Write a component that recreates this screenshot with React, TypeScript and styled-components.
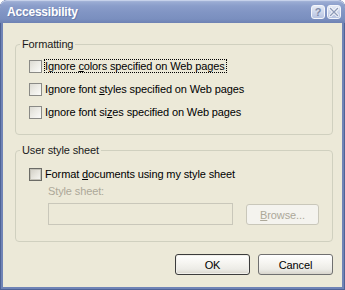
import React from "react";
import styled, { createGlobalStyle } from "styled-components";

const Global = createGlobalStyle`
  html, body { margin: 0; padding: 0; background: #ffffff; }
  body { font-family: "Liberation Sans", Arial, sans-serif; font-size: 11px; color: #000; letter-spacing: -0.12px; }
  #root { width: 345px; height: 290px; }
`;

const Window = styled.div`
  width: 345px;
  height: 290px;
  box-sizing: border-box;
  display: flex;
  flex-direction: column;
  background: #7084b6;
  border-radius: 7px 7px 0 0;
  padding: 0 3px 3px 3px;
  box-shadow: inset 1px 0 0 #4f6396, inset -1px 0 0 #4f6396, inset 0 -1px 0 #4f6396;
  overflow: hidden;
`;

const TitleBar = styled.div`
  height: 23px;
  margin: 0 -3px;
  padding: 0 4px 0 7px;
  box-sizing: border-box;
  display: flex;
  align-items: center;
  background: linear-gradient(
    180deg,
    #b4c2e0 0px,
    #9aabd3 2px,
    #8a9dca 6px,
    #8195c4 12px,
    #7a8fbf 19px,
    #6e82b3 23px
  );
  border-radius: 7px 7px 0 0;
  box-shadow: inset 0 1px 0 #c6d1ea;
`;

const Title = styled.span`
  flex: 1;
  font-family: "Liberation Sans", Arial, sans-serif;
  font-weight: bold;
  font-size: 12px;
  letter-spacing: -0.2px;
  color: #ffffff;
  text-shadow: 1px 1px 0 #6a7cab;
  padding-top: 1px;
`;

const CaptionButtons = styled.div`
  display: flex;
  gap: 2px;
  margin-top: 1px;
`;

const CaptionButton = styled.div`
  width: 14px;
  height: 14px;
  box-sizing: border-box;
  border: 1px solid #f4f6fb;
  border-radius: 3px;
  background: linear-gradient(180deg, #e6ebf6 0%, #c9d3ea 60%, #b6c3e1 100%);
  display: flex;
  align-items: center;
  justify-content: center;
  color: #7d8aa8;
  font-family: "Liberation Sans", Arial, sans-serif;
  font-weight: bold;
  font-size: 11px;
  line-height: 1;
`;

const Body = styled.div`
  flex: 1;
  background: #ece9d8;
  padding: 15px 9px 0 12px;
  display: flex;
  flex-direction: column;
`;

const Group = styled.fieldset`
  margin: 0;
  padding: 0;
  border: 1px solid #d0d0bf;
  border-radius: 4px;
  min-width: 0;
  & + & {
    margin-top: 9px;
  }
`;

const Legend = styled.legend`
  margin-left: 4px;
  padding: 0 2px;
  line-height: 13px;
  color: #1a1a1a;
`;

const GroupContent = styled.div<{ $top: number; $bottom: number }>`
  padding: ${(p) => p.$top}px 0 ${(p) => p.$bottom}px 13px;
  display: flex;
  flex-direction: column;
  gap: 9px;
`;

const Row = styled.div`
  display: flex;
  align-items: center;
  height: 14px;
  gap: 2px;
`;

const Check = styled.span<{ $hot?: boolean }>`
  width: 13px;
  height: 13px;
  box-sizing: border-box;
  flex: none;
  border: 1px solid ${(p) => (p.$hot ? "#6b6b66" : "#8a8a86")};
  background: ${(p) =>
    p.$hot
      ? "linear-gradient(135deg, #cfcdc4 0%, #e6e4dc 50%, #f8f8f4 100%)"
      : "linear-gradient(135deg, #dcdbd3 0%, #ecebe5 45%, #fbfbf9 100%)"};
  box-shadow: ${(p) => (p.$hot ? "inset 0 0 0 1px #c4c2b8" : "none")};
`;

const Label = styled.span<{ $focus?: boolean }>`
  border: 1px dotted ${(p) => (p.$focus ? "#000" : "transparent")};
  line-height: 12px;
  padding-right: 1px;
  white-space: nowrap;
`;

const Key = styled.span`
  text-decoration: underline;
`;

const SubLabel = styled.div`
  color: #aca899;
  margin: -5px 0 0 19px;
  line-height: 13px;
`;

const FileRow = styled.div`
  display: flex;
  align-items: flex-end;
  gap: 13px;
  margin: -4px 0 0 19px;
`;

const TextField = styled.div`
  width: 185px;
  height: 22px;
  box-sizing: border-box;
  border: 1px solid #c9c7ba;
  background: #ece9d8;
`;

const PushButton = styled.button<{ $disabled?: boolean; $default?: boolean }>`
  width: ${(p) => (p.$disabled ? 73 : 75)}px;
  height: 21px;
  box-sizing: border-box;
  padding: 0;
  font-family: "Liberation Sans", Arial, sans-serif;
  font-size: 11px;
  letter-spacing: -0.12px;
  border-radius: 3px;
  border: 1px solid
    ${(p) => (p.$disabled ? "#c9c7ba" : p.$default ? "#3c3c3c" : "#707070")};
  color: ${(p) => (p.$disabled ? "#aca899" : "#000")};
  background: ${(p) =>
    p.$disabled
      ? "#f4f3ee"
      : "linear-gradient(180deg, #ffffff 0%, #f6f5f1 40%, #ecebe6 75%, #d8d5cc 100%)"};
  box-shadow: ${(p) =>
    p.$default ? "inset 0 0 0 1px #f0efea" : "none"};
`;

const Footer = styled.div`
  display: flex;
  justify-content: flex-end;
  gap: 8px;
  margin-top: 12px;
`;

const CloseGlyph = () => (
  <svg width="10" height="10" viewBox="0 0 10 10">
    <path d="M1.5 1.5 L8.5 8.5 M8.5 1.5 L1.5 8.5" stroke="#ffffff" strokeWidth="3" strokeLinecap="square" />
    <path d="M1.5 1.5 L8.5 8.5 M8.5 1.5 L1.5 8.5" stroke="#8d9ab8" strokeWidth="1.4" strokeLinecap="square" />
  </svg>
);

export default function App() {
  return (
    <>
      <Global />
      <Window>
        <TitleBar>
          <Title>Accessibility</Title>
          <CaptionButtons>
            <CaptionButton>?</CaptionButton>
            <CaptionButton>
              <CloseGlyph />
            </CaptionButton>
          </CaptionButtons>
        </TitleBar>
        <Body>
          <Group>
            <Legend>Formatting</Legend>
            <GroupContent $top={8} $bottom={15}>
              <Row>
                <Check />
                <Label $focus>
                  Ignore <Key>c</Key>olors specified on Web pages
                </Label>
              </Row>
              <Row>
                <Check />
                <Label>
                  Ignore font <Key>s</Key>tyles specified on Web pages
                </Label>
              </Row>
              <Row>
                <Check />
                <Label>
                  Ignore font si<Key>z</Key>es specified on Web pages
                </Label>
              </Row>
            </GroupContent>
          </Group>
          <Group>
            <Legend>User style sheet</Legend>
            <GroupContent $top={10} $bottom={16}>
              <Row>
                <Check $hot />
                <Label>
                  Format <Key>d</Key>ocuments using my style sheet
                </Label>
              </Row>
              <SubLabel>Style sheet:</SubLabel>
              <FileRow>
                <TextField />
                <PushButton $disabled disabled>
                  <Key>B</Key>rowse...
                </PushButton>
              </FileRow>
            </GroupContent>
          </Group>
          <Footer>
            <PushButton $default>OK</PushButton>
            <PushButton>Cancel</PushButton>
          </Footer>
        </Body>
      </Window>
    </>
  );
}
